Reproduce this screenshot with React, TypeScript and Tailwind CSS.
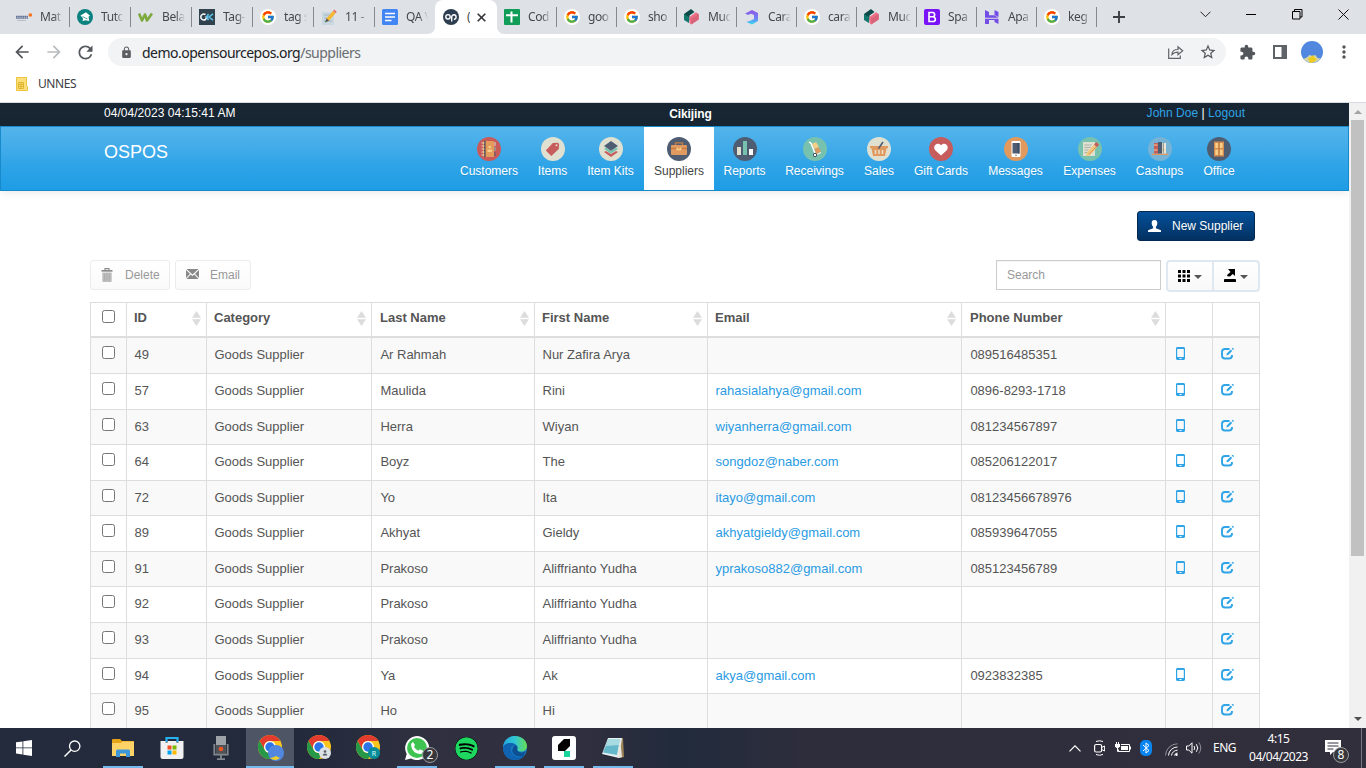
import React from "react";
import { FcGoogle } from "react-icons/fc";
import { FaSpotify } from "react-icons/fa";
import { MdExtension, MdRefresh, MdArrowBack, MdArrowForward, MdLock, MdStarBorder, MdMoreVert } from "react-icons/md";

type Kids = { children?: React.ReactNode };

/* ---------- Tab favicons ---------- */
const S16 = ({ children }: Kids) => (
  <svg width="16" height="16" viewBox="0 0 16 16" className="block shrink-0">{children}</svg>
);
const Google = () => (
  <span className="flex size-4 shrink-0 items-center justify-center rounded-full bg-white"><FcGoogle size={14} /></span>
);
const Alterra = () => (
  <S16>
    <path d="M0 7.500h12M0 9.200h12" stroke="#53658c" strokeWidth="1.300" strokeDasharray="1.700 .4" opacity=".9" />
    <path d="M1 11.500h9" stroke="#b9bfcb" strokeWidth="1" />
    <circle cx="14.300" cy="6" r="1.800" fill="#f5731c" />
  </S16>
);
const Tuto = () => (
  <S16><circle cx="8" cy="8" r="8" fill="#0b8180" /><path d="M3.500 6.500L9 3.300l4 3.500-1.500 1 .8 4.200-4.300-.8-2.500 1 .5-3z" fill="#fff" /><path d="M5.500 7.500l5 2.500" stroke="#0b8180" strokeWidth=".7" /></S16>
);
const W3 = () => (
  <S16><path d="M1 4.500l3 7 3-6 2 6 5-7" fill="none" stroke="#7da93e" strokeWidth="2.600" strokeLinejoin="round" /></S16>
);
const GK = () => (
  <S16><rect width="16" height="16" fill="#30424e" /><path d="M6.500 5.500C4.500 4.500 1.800 5.300 1.800 8s2.700 3.500 4.700 2.500L8 8 6.500 7.800" fill="none" stroke="#fff" strokeWidth="1.500" /><path d="M14 4.800L10 8l4 3.200M9.500 4.800L7.800 8l1.700 3.200" fill="none" stroke="#58bfe8" strokeWidth="1.600" /></S16>
);
const Memo = () => (
  <S16><rect x="1" y="3" width="12" height="13" fill="#c9d7e1" /><path d="M3 6h6M3 9h6M3 12h8" stroke="#a3b4c0" /><path d="M5.500 9.500L12 2l2.500 2.300L8 11.700l-3 1z" fill="#f6b82e" /><path d="M12 2l1.300-1.500 2.500 2.300-1.300 1.500z" fill="#e8736b" /><path d="M5.500 9.500L4 13.500l4-1.800z" fill="#4b555b" /></S16>
);
const Docs = () => (
  <S16><rect width="16" height="16" rx="1.500" fill="#4285f4" /><path d="M3 4.500h10M3 8h10M3 11.500h6.500" stroke="#fff" strokeWidth="1.700" /></S16>
);
const Op = () => (
  <S16><circle cx="8" cy="8" r="8" fill="#2c3e50" /><circle cx="5" cy="7.800" r="2.200" fill="none" stroke="#fff" strokeWidth="1.400" /><path d="M8.700 12.500V8a2.200 2.200 0 1 1 2.200 2.200" fill="none" stroke="#fff" strokeWidth="1.400" /></S16>
);
const Sheets = () => (
  <S16><rect width="16" height="16" rx="1" fill="#109d58" /><path d="M2 6.200h12M7.500 2.500v11" stroke="#fff" strokeWidth="2" /></S16>
);
const Mud = () => (
  <S16><path d="M0 5l7-5 3.500 3-5 3.500v5L0 10z" fill="#0e4a49" /><path d="M0 5l5 3v6l-5-3z" fill="#12786e" /><path d="M5.500 8L12 3.300 14.700 5v5.500l-7.500 5L5.500 14z" fill="#ee6f86" /><path d="M7.200 9.500L14.700 5v5.500l-7.500 5z" fill="#d9647a" /></S16>
);
const Cara = () => (
  <S16>
    <defs><linearGradient id="cg" x1="0" y1="0" x2="0" y2="1"><stop offset="0" stopColor="#9355e8" /><stop offset=".6" stopColor="#6c86f5" /><stop offset="1" stopColor="#2fe0ee" /></linearGradient></defs>
    <path d="M1 4.500L8 1l6 3v8l-6 3.500-5.500-2.500L7 11.500l3-1.500V6L7 4.700 4 6z" fill="url(#cg)" />
  </S16>
);
const Boot = () => (
  <S16><rect width="16" height="16" rx="2" fill="#7a12f8" /><path d="M5 3.500h3.500a2.100 2.100 0 0 1 0 4.300H5zM5 7.800h4a2.300 2.300 0 0 1 0 4.700H5z" fill="none" stroke="#fff" strokeWidth="1.600" /></S16>
);
const Hostinger = () => (
  <S16><path d="M1 1l4 2v3.300h5.300l4.200 2.400H1zM10.500 1l4 2v5l-4-2zM1 15V9.700h13.500V15l-4-2v-2H5v4z" fill="#673de6" opacity=".9" /></S16>
);

const leftTabs: [() => React.ReactElement, string][] = [
  [Alterra, "Mat"], [Tuto, "Tutc"], [W3, "Bela"], [GK, "Tag-"], [Google, "tag s"], [Memo, "11 -"], [Docs, "QA V"],
];
const rightTabs: [() => React.ReactElement, string][] = [
  [Sheets, "Cod"], [Google, "goo"], [Google, "sho"], [Mud, "Muc"], [Cara, "Cara"], [Google, "cara"], [Mud, "Muc"], [Boot, "Spa"], [Hostinger, "Apa"], [Google, "keg"],
];

const TabText = ({ t }: { t: string }) => (
  <span className="ml-2 w-[23px] overflow-hidden whitespace-nowrap text-[12px] leading-4 tracking-[-0.4px] text-[#45494d] [mask-image:linear-gradient(to_right,black_60%,transparent)]">{t}</span>
);

function TabStrip() {
  return (
    <div className="flex h-[34px] bg-[#dee1e6] pl-[9px]">
      {leftTabs.map(([I, t], i) => (
        <div key={t} className={"flex h-[34px] shrink-0 items-center " + (i === 6 ? "w-[53px] pl-[7px]" : "w-[61px] pl-[7px]")}>
          <I /><TabText t={t} />
          {i < 6 && <span className="ml-auto h-5 w-px shrink-0 bg-[#85898e]" />}
        </div>
      ))}
      <div className="h-[34px] w-[7px] shrink-0 bg-white"><div className="h-full w-full rounded-br-lg bg-[#dee1e6]" /></div>
      <div className="w-[62px] shrink-0 bg-[#dee1e6]">
        <div className="flex h-full w-full items-center rounded-t-lg bg-white pl-2">
          <Op />
          <span className="ml-2 w-[3px] overflow-hidden text-[12px] text-[#45494d]">(</span>
          <svg width="9" height="9" viewBox="0 0 9 9" className="ml-[7px]"><path d="M.7.7l7.600 7.600M8.300.7L.7 8.300" stroke="#303236" strokeWidth="1.600" /></svg>
        </div>
      </div>
      <div className="h-[34px] w-[7px] shrink-0 bg-white"><div className="h-full w-full rounded-bl-lg bg-[#dee1e6]" /></div>
      {rightTabs.map(([I, t], i) => (
        <div key={i} className="flex h-[34px] w-[60px] shrink-0 items-center">
          <I /><TabText t={t} />
          <span className="ml-[5px] h-5 w-px shrink-0 bg-[#85898e]" />
        </div>
      ))}
      <svg width="12" height="12" viewBox="0 0 12 12" className="mt-[11px] ml-[9px] shrink-0"><path d="M6 0v12M0 6h12" stroke="#3c4043" strokeWidth="1.900" /></svg>
      <div className="mt-[8px] ml-[75px] flex h-3 shrink-0 items-center">
        <svg width="11" height="7" viewBox="0 0 11 7"><path d="M.5.7l5 5 5-5" fill="none" stroke="#222" /></svg>
        <svg width="10" height="1" className="ml-[35px]"><path d="M0 .5h10" stroke="#000" /></svg>
        <svg width="11" height="11" viewBox="0 0 11 11" className="ml-9"><path d="M.5 2.500h7.500v7.500H.5zM2.500 2.500v-2H10V8H8" fill="none" stroke="#000" /></svg>
        <svg width="11" height="11" viewBox="0 0 11 11" className="ml-[35px]"><path d="M.5.5l10 10M10.500.5l-10 10" stroke="#111" /></svg>
      </div>
    </div>
  );
}

function Toolbar() {
  return (
    <div className="flex h-9 items-center bg-white">
      <MdArrowBack size={20} className="ml-3 text-[#53575b]" />
      <MdArrowForward size={20} className="ml-3 text-[#b9bcbf]" />
      <MdRefresh size={21} className="ml-[11px] text-[#53575b]" />
      <div className="ml-3 flex h-7 w-[1118px] items-center rounded-full bg-[#f1f3f4]">
        <MdLock size={13} className="ml-[12px] text-[#5a5e62]" />
        <span className="ml-[9px] text-[14px] tracking-[-0.52px] text-[#202124]">demo.opensourcepos.org<span className="text-[#686c70]">/suppliers</span></span>
        <svg width="16" height="14" viewBox="0 0 16 14" className="ml-auto"><path d="M.7 3.500v9.800h11.600v-2.800M4 9.500c0-3.500 2.500-5 6-5V1.700L14.700 5.800 10 9.700V7.200c-3 0-4.500.5-6 2.300z" fill="none" stroke="#5f6368" strokeWidth="1.200" /></svg>
        <MdStarBorder size={18} className="mr-[9px] ml-[15px] text-[#53575b]" />
      </div>
      <MdExtension size={17} className="ml-[13px] text-[#53575b]" />
      <svg width="14" height="14" viewBox="0 0 14 14" className="ml-[17px]"><path d="M1 1h12v12H1zM9.500 1v12M11.500 1v12" fill="none" stroke="#5f6368" strokeWidth="2" /></svg>
      <svg width="22" height="22" viewBox="0 0 22 22" className="ml-[14px]">
        <circle cx="11" cy="11" r="11" fill="#5187df" />
        <path d="M2.500 18l4-2 2-2 3 1 3-1 2 3 3 .5A11 11 0 0 1 2.500 18z" fill="#d5d6a8" />
        <path d="M7 17l3-1 2-2 2 3 2 1-3 3-4 1z" fill="#edce20" />
      </svg>
      <MdMoreVert size={20} className="ml-[11px] text-[#53575b]" />
    </div>
  );
}

function Bookmarks() {
  return (
    <div className="flex h-[33px] items-start border-b border-[#d7dade] bg-white pl-4">
      <svg width="12" height="14" viewBox="0 0 12 14" className="mt-[7px]"><path d="M.5.5h10v8l1 1.500v3.500H.5z" fill="#fddf7a" stroke="#ecc440" /><path d="M2.500 5.500h5v6h-5zM2.500 7.500h5M2.500 9.500h5M5 5.500v6" fill="none" stroke="#d8ab1e" strokeWidth=".8" /></svg>
      <span className="mt-[6px] ml-[10px] text-[12px] leading-4 tracking-[-0.4px] text-[#3c4043]">UNNES</span>
    </div>
  );
}

/* ---------- Module icons ---------- */
const Disc = ({ c, children }: { c: string } & Kids) => (
  <svg width="24" height="24" viewBox="0 0 24 24" className="block"><circle cx="12" cy="12" r="12" fill={c} />{children}</svg>
);
const modules: { n: string; w: string; icon: React.ReactNode }[] = [
  { n: "Customers", w: "w-[78px]", icon: <Disc c="#c85b5a"><rect x="6" y="4" width="11" height="16" rx="1" fill="#e39a5b" /><path d="M7.800 4v16" stroke="#4b4450" strokeWidth="1.500" /><path d="M4.500 6h3M4.500 9h3M4.500 12h3M4.500 15h3M4.500 18h3" stroke="#e8e4d6" strokeWidth=".9" /><path d="M18 5v4" stroke="#e0e0d1" /><path d="M18 10v4" stroke="#76c2af" /><path d="M18 15v4" stroke="#4f5d73" /><circle cx="12.700" cy="10" r="1.300" fill="#f5cf87" /><path d="M10.500 15v-2.500h4.400V15z" fill="#f5cf87" /></Disc> },
  { n: "Items", w: "w-[49px]", icon: <Disc c="#e0e0d1"><path d="M4.800 13.500l7-7.500 5-.3 1.300 1.300-.3 5-7.500 7z" fill="#c75c5c" /><circle cx="15.500" cy="8.200" r="1" fill="#e0e0d1" /></Disc> },
  { n: "Item Kits", w: "w-[67px]", icon: <Disc c="#e0e0d1"><path d="M5 15l7 5 7-5-2-1-5 3-5-3z" fill="#c75c5c" /><path d="M5 11.700l7 5 7-5-2-1-5 3-5-3z" fill="#76c2af" /><path d="M5 9l7-5 7 5-7 4.800z" fill="#4f5d73" /></Disc> },
  { n: "Suppliers", w: "w-[70px]", icon: <Disc c="#4f5d73"><rect x="4" y="8" width="16" height="10" rx="1" fill="#e0995e" /><path d="M8.500 8V5.800h7V8M4 11.500h6M14 11.500h6" fill="none" stroke="#c57e45" strokeWidth="1.300" /><path d="M10.200 10.500v2h3.600v-2" fill="none" stroke="#f5cf87" strokeWidth="1.300" /></Disc> },
  { n: "Reports", w: "w-[61px]", icon: <Disc c="#4f5d73"><path d="M4 10h4v8H4z" fill="#e0e0d1" /><path d="M10 4h4v14h-4z" fill="#76c2af" /><path d="M16 12h4v6h-4z" fill="#fff" /></Disc> },
  { n: "Receivings", w: "w-[79px]", icon: <Disc c="#76c2af"><path d="M6 5l2 1.200 4 10" fill="none" stroke="#fff" strokeWidth="1.500" /><path d="M9 7l4-2 3 5-4.500 2z" fill="#f5cf87" /><path d="M11.500 12l4-1.800 2.500 4.500-4.700 2.300z" fill="#e0995e" /><path d="M12 18.500l6-3" stroke="#fff" /><circle cx="12" cy="18" r="1.700" fill="#fff" stroke="#40515d" /></Disc> },
  { n: "Sales", w: "w-[50px]", icon: <Disc c="#e0e0d1"><path d="M3 9h18v2l-1.500.5L18 19H6L4.500 11.500 3 11z" fill="#e0995e" /><path d="M8.500 13v4M12 13v4M15.500 13v4" stroke="#e9e1cf" strokeWidth="1.500" /><path d="M16 5l-4.500 6.500" stroke="#4f5d73" strokeWidth="1.600" /></Disc> },
  { n: "Gift Cards", w: "w-[74px]", icon: <Disc c="#c75c5c"><path d="M12 18.500l-5.500-5C3 10 7.500 4 12 8.300 16.500 4 21 10 17.500 13.500z" fill="#fff" /></Disc> },
  { n: "Messages", w: "w-[75px]", icon: <Disc c="#e0995e"><rect x="7.500" y="4" width="9" height="16" rx="1.200" fill="#fff" /><path d="M8.500 6h7v10.500h-7z" fill="#4f5d73" /><path d="M13 6h2.500v10.500H14z" fill="#3d4c60" /><circle cx="12" cy="18.300" r=".8" fill="#687080" /></Disc> },
  { n: "Expenses", w: "w-[73px]", icon: <Disc c="#76c2af"><path d="M5 5h12v14H5z" fill="#e0e0d1" /><path d="M6.500 8h7M6.500 10.500h6M6.500 13h4M6.500 15.500h7" stroke="#a9b3a7" /><path d="M8.500 16L16 7.500l3 2.700-7.500 8.300-3.500.7z" fill="#f1c780" /><path d="M11 17.500l7-7.500" stroke="#df8f49" /><path d="M16 7.500L18.200 5 21 7.500l-2 2.700z" fill="#c75c5c" /></Disc> },
  { n: "Cashups", w: "w-[67px]", icon: <Disc c="#77b3d4"><path d="M4 16.500h16v1.500H4z" fill="#e0995e" /><path d="M6 6h4v10.500H6z" fill="#c75c5c" /><path d="M10 5h4v11.500h-4z" fill="#4f5d73" /><path d="M14 6h4v10.500h-4z" fill="#ede7d7" /><path d="M6 8h3.500M6 13h3.500M14 13h3.500" stroke="#f6cd86" /><path d="M15.300 6v10" stroke="#55616e" strokeWidth=".7" /></Disc> },
  { n: "Office", w: "w-[52px]", icon: <Disc c="#4f5d73"><path d="M7 4.500h10v15H7z" fill="#d78b4d" /><path d="M8.300 6h3v5h-3zM12.700 6h3v5h-3zM8.300 12.500h3v5.500h-3zM12.700 12.500h3v5.500h-3z" fill="#f5cf87" /><path d="M12 5v14" stroke="#b66d36" strokeWidth=".8" /></Disc> },
];

function Header() {
  return (
    <>
      <div className="flex h-[23px] items-start bg-[#182633] text-[12px] leading-[20px] text-white">
        <span className="w-[532px] pl-[104px] tracking-[0.03px]">04/04/2023 04:15:41 AM</span>
        <span className="w-[317px] pt-[1px] text-center font-bold tracking-[-0.1px]">Cikijing</span>
        <span className="w-[396px] text-right tracking-[0.03px]"><a className="text-[#2fa4e7]">John Doe</a> | <a className="text-[#2fa4e7]">Logout</a></span>
      </div>
      <nav className="flex h-[65px] justify-between border border-[#178acc] bg-linear-to-b from-[#54b4eb] from-0% via-[#2fa4e7] via-60% to-[#1d9ce5] pr-[103px] pl-[103px] text-white shadow-[0_1px_10px_rgba(0,0,0,0.1)]">
        <span className="pt-[11px] text-[18px] leading-7">OSPOS</span>
        <div className="flex">
          {modules.map((m) => (
            <div key={m.n} className={"flex shrink-0 flex-col items-center pt-[10px] text-[12px] whitespace-nowrap " + m.w + (m.n === "Suppliers" ? " bg-white text-[#444]" : "")}>
              {m.icon}
              <span className={"pt-px leading-[19px]" + (m.n === "Suppliers" ? "" : " [text-shadow:0_1px_0_rgba(0,0,0,0.1)]")}>{m.n}</span>
            </div>
          ))}
        </div>
      </nav>
    </>
  );
}

/* ---------- Table ---------- */
const cols = "grid grid-cols-[36px_80px_165px_163px_173px_254px_204px_47px_48px]";
type Row = [string, string, string, string, string, string];
const rows: Row[] = [
  ["49", "Ar Rahmah", "Nur Zafira Arya", "", "089516485351", "h-9"],
  ["57", "Maulida", "Rini", "rahasialahya@gmail.com", "0896-8293-1718", "h-9"],
  ["63", "Herra", "Wiyan", "wiyanherra@gmail.com", "081234567897", "h-[35px]"],
  ["64", "Boyz", "The", "songdoz@naber.com", "085206122017", "h-9"],
  ["72", "Yo", "Ita", "itayo@gmail.com", "08123456678976", "h-[35px]"],
  ["89", "Akhyat", "Gieldy", "akhyatgieldy@gmail.com", "085939647055", "h-9"],
  ["91", "Prakoso", "Aliffrianto Yudha", "yprakoso882@gmail.com", "085123456789", "h-[35px]"],
  ["92", "Prakoso", "Aliffrianto Yudha", "", "", "h-9"],
  ["93", "Prakoso", "Aliffrianto Yudha", "", "", "h-9"],
  ["94", "Ya", "Ak", "akya@gmail.com", "0923832385", "h-[35px]"],
  ["95", "Ho", "Hi", "", "", "h-9"],
];

const Check = () => <span className="block size-[13px] rounded-[2.5px] border border-[#767676] bg-white" />;
const Sort = () => (
  <svg width="9" height="15" viewBox="0 0 9 15" className="mt-px"><path d="M4.500 0L9 6.800H0zM0 8.200h9L4.500 15z" fill="#dcdcdc" /></svg>
);
const Phone = () => (
  <svg width="9" height="13" viewBox="0 0 9 13"><path d="M1 0h7l1 1v11l-1 1H1l-1-1V1zM1.200 2v8h6.600V2zM3.500 11v1h2v-1z" fill="#2fa4e7" fillRule="evenodd" /></svg>
);
const Edit = () => (
  <svg width="14" height="13" viewBox="0 0 14 13"><path d="M8.500 2H4Q1 2 1 5v3.500q0 3 3 3h4q3 0 3-3V8" fill="none" stroke="#2fa4e7" strokeWidth="1.900" /><path d="M5.500 8.500L6 6.300 9.800 2.500l1.400 1.400L7.500 7.800z" fill="#2fa4e7" /><path d="M10.600 1.700l1-1 1.500 1.400-1 1z" fill="#2fa4e7" /></svg>
);
const Caret = () => <svg width="8" height="4" viewBox="0 0 8 4" className="mt-[2px] ml-1"><path d="M0 0h8L4 4z" fill="#555" /></svg>;

const Cell = ({ children, link, wide }: Kids & { link?: boolean; wide?: boolean }) => (
  <div className={"border-l border-[#ddd] pt-[7px] leading-[20px] " + (wide ? "pl-[8.4px] " : "pl-[7.5px] ") + (link ? "text-[#2a9be3]" : "")}>{children}</div>
);
const HeadCell = ({ t }: { t: string }) => (
  <div className={"flex justify-between border-l border-[#ddd] pt-[5px] pr-[5px] text-[13px] leading-[20px] font-bold text-[#555] " + (t === "Last Name" || t === "Phone Number" ? "pl-2" : "pl-[7px]")}><span>{t}</span><span className="pt-[2px]"><Sort /></span></div>
);

function Table() {
  return (
    <div className="w-[1170px] border-t border-r border-[#ddd] text-[13px] text-[#555]">
      <div className={cols + " h-[35px] border-b-2 border-[#ddd]"}>
        <div className="border-l border-[#ddd] pt-[7px] pl-[11px]"><Check /></div>
        {["ID", "Category", "Last Name", "First Name", "Email", "Phone Number"].map((t) => <HeadCell key={t} t={t} />)}
        <div className="border-l border-[#ddd]" /><div className="border-l border-[#ddd]" />
      </div>
      {rows.map(([id, last, first, email, phone, h], i) => (
        <div key={id} className={cols + " border-b border-[#ddd] " + h + (i % 2 === 0 ? " bg-[#f9f9f9]" : " bg-white")}>
          <div className="border-l border-[#ddd] pt-[8px] pl-[11px]"><Check /></div>
          <Cell>{id}</Cell>
          <Cell>Goods Supplier</Cell>
          <Cell wide>{last}</Cell>
          <Cell>{first}</Cell>
          <Cell link>{email}</Cell>
          <Cell wide>{phone}</Cell>
          <div className="border-l border-[#ddd] pt-[9px] pl-[10px]">{phone && <Phone />}</div>
          <div className="border-l border-[#ddd] pt-[9px] pl-[8px]"><Edit /></div>
        </div>
      ))}
    </div>
  );
}

function Page() {
  return (
    <div className="h-[625px] w-[1349px] overflow-hidden bg-white font-['Liberation_Sans',Arial,sans-serif]">
      <Header />
      <div className="px-[90px] pt-5">
        <div className="flex justify-end pr-1">
          <button className="flex h-[30px] w-[118px] items-center rounded-[3px] border border-[#032952] bg-linear-to-b from-[#04519b] to-[#033161] pl-[10px] text-[12px] text-white [text-shadow:0_1px_0_rgba(0,0,0,0.15)]">
            <svg width="13" height="12" viewBox="0 0 14 13"><path d="M7 0c2.500 0 3.300 1.500 3 4-.2 1.600-.8 2.600-1.500 3.300V9L14 11v2H0v-2l5.500-2V7.300C4.800 6.600 4.200 5.600 4 4c-.3-2.500.5-4 3-4z" fill="#fff" /></svg>
            <span className="ml-[11px]">New Supplier</span>
          </button>
        </div>
        <div className="mt-[19px] flex h-[42px] w-[1170px] items-start text-[12px]">
          <button className="flex h-[30px] w-20 items-center rounded-[3px] border border-[#ececec] bg-linear-to-b from-white to-[#fafafa] pl-[10px] text-[#999]">
            <svg width="12" height="14" viewBox="0 0 12 14" className="-mt-px"><path d="M4 2V.7h4V2" fill="none" stroke="#8d8d8d" strokeWidth="1.200" /><path d="M.5 2h11v1.700H.5z" fill="#8d8d8d" /><path d="M1.300 4.500h9.400V13q0 1-1 1H2.300q-1 0-1-1z" fill="#bdbdbd" /><path d="M3.500 5.500v7M6 5.500v7M8.500 5.500v7" stroke="#a5a5a5" strokeWidth=".6" /></svg>
            <span className="ml-[12px]">Delete</span>
          </button>
          <button className="ml-[5px] flex h-[30px] w-[76px] items-center rounded-[3px] border border-[#ececec] bg-linear-to-b from-white to-[#fafafa] pl-[10px] text-[#999]">
            <svg width="13" height="10" viewBox="0 0 13 10" className="-mt-[2px]"><path d="M.5 0h12L6.500 5.500zM0 1l4 3.800L0 9zM13 1L9 4.800 13 9zM.5 10l4.200-4.500 1.800 1.600 1.800-1.600L12.500 10z" fill="#888" /></svg>
            <span className="ml-[11px]">Email</span>
          </button>
          <div className="ml-auto flex h-[30px] w-[165px] items-center border border-[#ccc] bg-white pl-[10px] text-[#999] shadow-[inset_0_1px_1px_rgba(0,0,0,0.05)]">Search</div>
          <div className="ml-[5px] flex h-8 w-[94px] rounded-[4px] border-2 border-[#dfe8f1] bg-linear-to-b from-white to-[#f8f8f8]">
            <div className="flex w-[46px] items-center border-r-2 border-[#dfe8f1] pl-[10px]">
              <svg width="12" height="12" viewBox="0 0 12 12" className="-mt-px"><path d="M0 0h3v3H0zM4.500 0h3v3h-3zM9 0h3v3H9zM0 4.500h3v3H0zM4.500 4.500h3v3h-3zM9 4.500h3v3H9zM0 9h3v3H0zM4.500 9h3v3h-3zM9 9h3v3H9z" fill="#000" /></svg>
              <Caret />
            </div>
            <div className="flex items-center pl-[10px]">
              <svg width="12" height="13" viewBox="0 0 12 13" className="-mt-[2px]"><path d="M.5 10h11l.5.8V13H0v-2.200zM4 0h7v7L8.800 5 6 7.500 3.500 7.200 3 6l3.500-3z" fill="#000" /></svg>
              <Caret />
            </div>
          </div>
        </div>
        <Table />
      </div>
    </div>
  );
}

function Scrollbar() {
  return (
    <div className="flex h-[625px] w-[17px] flex-col items-center bg-[#f1f1f1]">
      <svg width="8" height="4" viewBox="0 0 8 4" className="mt-[7px]"><path d="M0 4h8L4 0z" fill="#a3a3a3" /></svg>
      <div className="mt-[6px] h-[436px] w-[13px] bg-[#c1c1c1]" />
      <svg width="8" height="4" viewBox="0 0 8 4" className="mt-auto mb-[7px]"><path d="M0 0h8L4 4z" fill="#505050" /></svg>
    </div>
  );
}

/* ---------- Taskbar ---------- */
const Chrome = ({ badge }: { badge: React.ReactNode }) => (
  <svg width="27" height="27" viewBox="0 0 27 27" className="mt-[1px] ml-[3px] overflow-visible">
    <circle cx="12" cy="12" r="12" fill="#fbc51d" />
    <path d="M1.600 6A12 12 0 0 1 22.400 6H12a6 6 0 0 0-5.200 9z" fill="#e33b2e" />
    <path d="M1.600 6A12 12 0 0 0 12 24l5.200-9A6 6 0 0 1 6.800 15z" fill="#279847" />
    <circle cx="12" cy="12" r="6" fill="#fff" /><circle cx="12" cy="12" r="4.700" fill="#2c75e8" />
    {badge}
  </svg>
);
const apps: { i: React.ReactNode; s: 0 | 1 | 2 }[] = [
  { s: 1, i: <svg width="22" height="19" viewBox="0 0 22 19"><path d="M0 1q0-1 1-1h7l2 2h11q1 0 1 1v14H0z" fill="#e6a519" /><path d="M0 4h9l1.500-1.500H22V17H0z" fill="#fdd267" /><path d="M4 18v-6q0-1.500 1.500-1.500h11Q18 10.500 18 12v6h-4v-3.500H8V18z" fill="#3c97db" /></svg> },
  { s: 0, i: <svg width="24" height="24" viewBox="0 0 24 24"><path d="M6.500 6V2h11v4" fill="none" stroke="#29b2ef" strokeWidth="2.200" /><path d="M.5 5h5v1.500h2.200V5h8.600v1.500h2.200V5h5v16q0 2-2 2h-19q-2 0-2-2z" fill="#f1f1f1" /><path d="M7.500 9.500h4v4h-4z" fill="#f25022" /><path d="M12.500 9.500h4v4h-4z" fill="#7fba00" /><path d="M7.500 14.500h4v4h-4z" fill="#00a4ef" /><path d="M12.500 14.500h4v4h-4z" fill="#ffb900" /></svg> },
  { s: 0, i: <svg width="16" height="24" viewBox="0 0 16 24"><path d="M3 0h10v17H3z" fill="#9da2a8" /><path d="M3 9h10v9H3z" fill="#4f5358" /><circle cx="8" cy="13" r="2.300" fill="#ee5524" /><path d="M1.300 8v10.700h13.400V8M8 19v4M4 23.200h8" fill="none" stroke="#81878d" strokeWidth="1.800" /></svg> },
  { s: 2, i: <Chrome badge={<g><circle cx="18" cy="18" r="8" fill="#5187df" /><path d="M12 23l4-1 2-1 4 2a8 8 0 0 1-10 0z" fill="#efd128" /></g>} /> },
  { s: 0, i: <Chrome badge={<g><circle cx="18" cy="18" r="6" fill="#dce1e6" /><circle cx="18" cy="16.500" r="1.300" fill="#555c63" /><path d="M15.700 20.500q0-2 2.300-2t2.300 2z" fill="#555c63" /></g>} /> },
  { s: 0, i: <Chrome badge={<g><circle cx="18" cy="18" r="6" fill="#078c97" /><text x="18" y="20.600" fontSize="7" textAnchor="middle" fill="#dff">R</text></g>} /> },
  { s: 1, i: <div className="relative"><svg width="24" height="24" viewBox="0 0 24 24"><path d="M0 24l1.700-6A12 12 0 1 1 6 22.400z" fill="#fff" /><circle cx="12" cy="12" r="10" fill="#3ec351" /><path d="M8 6l2 3-1 1.700q1.600 3 4.300 4l1.700-1.500 3 1.500q0 3-3 3.300Q7.500 17.500 6 9.500 6 6.500 8 6z" fill="#fff" /></svg><span className="absolute top-[11px] left-[17px] flex size-4 items-center justify-center rounded-full border border-[#9a9ca0] bg-[#37383c] text-[12px] leading-none text-white">2</span></div> },
  { s: 0, i: <FaSpotify size={23} className="rounded-full bg-black text-[#1ed760]" /> },
  { s: 1, i: <svg width="24" height="24" viewBox="0 0 24 24"><defs><linearGradient id="eg"><stop stopColor="#23a9dc" /><stop offset=".5" stopColor="#31c6d5" /><stop offset="1" stopColor="#66df51" /></linearGradient></defs><circle cx="12" cy="12" r="12" fill="#177cc4" /><path d="M0 11C1 3.500 6 0 12 0c7.500 0 12 5.500 12 10 0 5-5 6.500-9 5-2-.8-.5-1.500-.5-3.500 0-2.500-3-4.500-6.500-4.500C4 7 1.500 9 0 11z" fill="url(#eg)" /><path d="M0 11C2 7 9 5.500 12 9c-4 0-5 4-3.500 7.500 2 4.500 7 6 12.500 3-3 5-12 6.500-17 2C1 19 0 15 0 11z" fill="#1063b1" /><path d="M14.500 12c-1 2.500 1 4.500 5 4.500l3-1-2 4.500C14 22 8 18 9.500 13q1-3 2.500-4 2.500.5 2.500 3z" fill="#0d4f92" /></svg> },
  { s: 1, i: <svg width="24" height="24" viewBox="0 0 24 24"><rect width="24" height="24" rx="3" fill="#fff" /><path d="M6 9l6-6h6v7l-5 5H6z" fill="#000" /><path d="M12 15h6v6h-6z" fill="#19d59b" /></svg> },
  { s: 1, i: <svg width="24" height="24" viewBox="0 0 24 24"><path d="M8 2h14l1 19-4 1z" fill="#9d8459" /><path d="M7 2h14l-3 20L1 18z" fill="#e6f1f3" /><path d="M7.500 3H19l-3 16L2 16.500z" fill="#65b8ca" /><path d="M7.500 3H19l-1 6L5 10z" fill="#a9dbe3" /><path d="M19 4l2 17-3 1-2-1z" fill="#e8e7df" /></svg> },
];

function Taskbar() {
  return (
    <div className="flex h-10 bg-[linear-gradient(90deg,#232b3c_0px,#222a3c_300px,#2f3040_420px,#312f3e_570px,#212b3c_680px,#2d2d3c_800px,#322f3c_1366px)]">
      <div className="flex w-12 items-center justify-center"><svg width="16" height="16" viewBox="0 0 16 16"><path d="M0 2.300l6.500-.9v6.100H0zM7.300 1.300L16 0v7.500H7.300zM0 8.300h6.500v6.100L0 13.500zM7.300 8.300H16V16l-8.700-1.300z" fill="#fff" /></svg></div>
      <div className="mr-[3px] flex w-12 items-center justify-center"><svg width="17" height="17" viewBox="0 0 17 17"><circle cx="10.700" cy="6.200" r="5.200" fill="none" stroke="#fff" strokeWidth="1.300" /><path d="M7 10L.5 16.500" stroke="#fff" strokeWidth="1.500" /></svg></div>
      {apps.map((a, i) => (
        <div key={i} className={"mr-px flex w-12 shrink-0 flex-col items-center " + (a.s === 2 ? "bg-[#4e5666]" : "")}>
          <div className="flex h-[38px] items-center justify-center pt-[2px]">{a.i}</div>
          {a.s > 0 && <div className={"h-[2px] bg-[#76b9ed] " + (a.s === 2 ? "w-12" : "w-10")} />}
        </div>
      ))}
      <div className="ml-auto flex h-10 items-center text-white">
        <svg width="12" height="7" viewBox="0 0 12 7"><path d="M.5 6.300L6 .8l5.500 5.500" fill="none" stroke="#fff" strokeWidth="1.200" /></svg>
        <svg width="11" height="16" viewBox="0 0 11 16" className="ml-[13px]"><rect x=".6" y="4.500" width="7" height="7.500" rx="1.500" fill="none" stroke="#fff" strokeWidth="1.200" /><path d="M7.600 7.500l3-1.500v5l-3-1.500M2 1.500q3.500-1.500 7 0M2 14.500q3.500 1.500 7 0" fill="none" stroke="#fff" /></svg>
        <svg width="16" height="12" viewBox="0 0 16 12" className="ml-[10px]"><path d="M6 2.500h8.500v7H3.500V7.500M15.500 4.500v3" fill="none" stroke="#fff" /><path d="M6 4h7v4H6z" fill="#fff" /><path d="M1.500 0v2M3.500 0v2" stroke="#fff" /><path d="M0 2h5v2.500L3.500 6h-2L0 4.500z" fill="#fff" /><path d="M2.500 6v3.500h1" fill="none" stroke="#fff" /></svg>
        <svg width="12" height="16" viewBox="0 0 12 16" className="ml-[9px]"><rect width="12" height="16" rx="5" fill="#0a84ee" /><path d="M3 5l6 5.500L6 13V3l3 2.500L3 11" fill="none" stroke="#fff" /></svg>
        <svg width="13" height="13" viewBox="0 0 13 13" className="ml-[13px] mt-[2px]"><path d="M.5 12.500A12 12 0 0 1 12.500.8" fill="none" stroke="#8f8e96" /><path d="M3.500 12.500a9 9 0 0 1 9-8.500M6.500 12.500a6 6 0 0 1 6-5.300" fill="none" stroke="#fff" /><path d="M9.500 12.500a3.500 3.500 0 0 1 3-2.500" fill="none" stroke="#fff" /><circle cx="11.500" cy="11.800" r="1.200" fill="#fff" /></svg>
        <svg width="17" height="14" viewBox="0 0 17 14" className="ml-[8px]"><path d="M.5 5h2.300L6 1.800v10.400L2.800 9H.5zM8 5q1.500 2 0 4M10.300 3.200q3 3.800 0 7.600" fill="none" stroke="#fff" /><path d="M12.800 1.500q4 5.500 0 11" fill="none" stroke="#8f8e96" /></svg>
        <span className="ml-[10px] w-[24px] text-[12px] tracking-[-0.5px]">ENG</span>
        <div className="ml-[11px] w-[61px] text-center text-[12px] leading-[18px] tracking-[-0.5px] whitespace-nowrap">4:15<br />04/04/2023</div>
        <div className="relative ml-[16px] h-4 w-[26px]">
          <svg width="16" height="16" viewBox="0 0 16 16"><path d="M0 0h16v12H8l-3 3v-3H0z" fill="#fff" /><path d="M2.500 3h11M2.500 6h11M2.500 9h6" stroke="#34303d" /></svg>
          <span className="absolute top-[7px] left-[8px] flex size-4 items-center justify-center rounded-full border border-[#9a9ca0] bg-[#37383c] text-[12px] leading-none">8</span>
        </div>
        <span className="mr-1 ml-[10px] h-10 w-px bg-[#77757f]" />
      </div>
    </div>
  );
}

export default function App() {
  return (
    <div className="h-[768px] w-[1366px] overflow-hidden bg-white font-['Noto_Sans','Open_Sans',sans-serif]">
      <TabStrip />
      <Toolbar />
      <Bookmarks />
      <div className="flex"><Page /><Scrollbar /></div>
      <Taskbar />
    </div>
  );
}
